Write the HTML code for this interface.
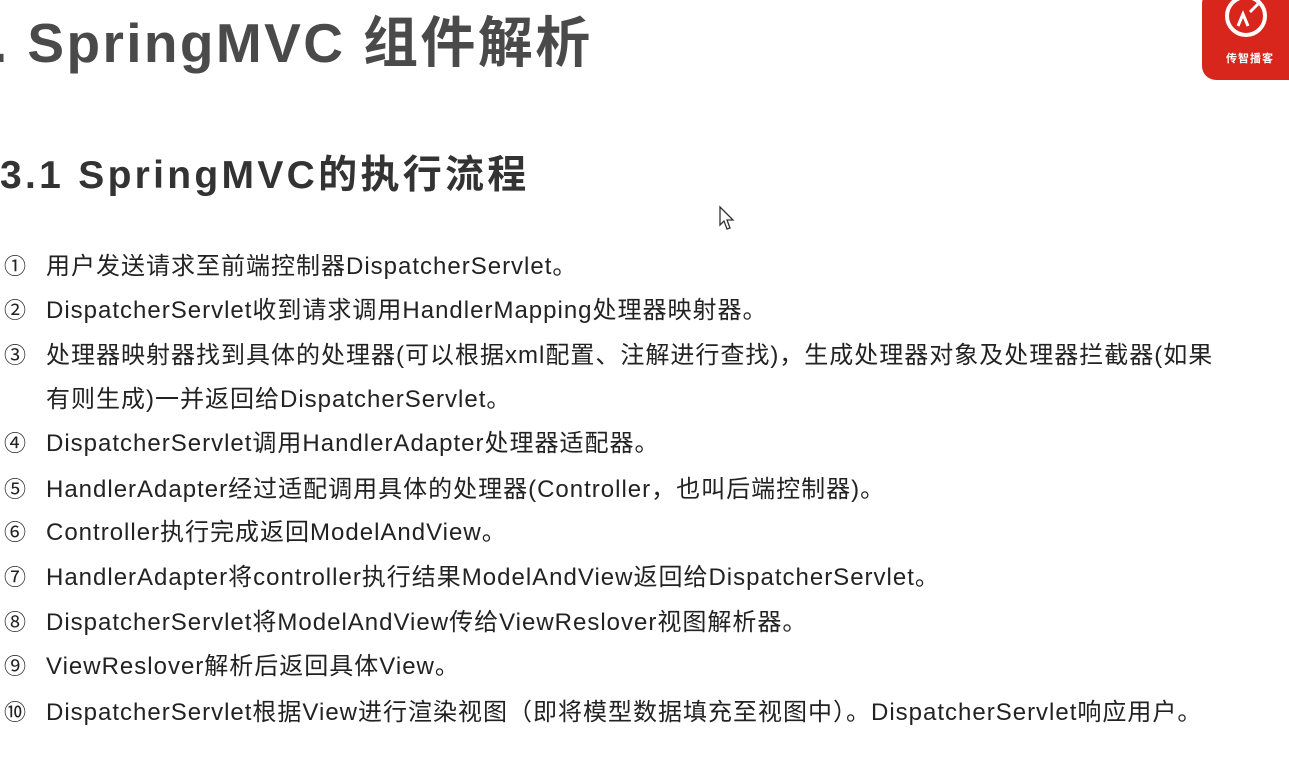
<!DOCTYPE html>
<html><head><meta charset="utf-8"><style>
body{margin:0;width:1289px;height:781px;background:#fff;overflow:hidden;position:relative;font-family:"Liberation Sans","Noto Sans CJK SC",sans-serif;}
.t1{position:absolute;left:-8px;top:-2px;font-size:55px;font-weight:bold;color:#4a4a4a;white-space:nowrap;letter-spacing:2.4px}
.t2{position:absolute;left:0;top:144px;font-size:39px;font-weight:bold;color:#333;white-space:nowrap;letter-spacing:3.3px}
.l{position:absolute;left:0;font-size:24px;color:#222;white-space:nowrap;letter-spacing:1px}
.n{display:inline-block;width:46px;font-size:22px;padding-left:4px;box-sizing:border-box;letter-spacing:0}
.logo{position:absolute;left:1202px;top:-10px;width:110px;height:90px;background:#d8261c;border-radius:14px;color:#fff;font-size:11px;font-weight:bold}
</style></head><body>
<div class="t1">. SpringMVC 组件解析</div>
<div class="logo">
<svg width="110" height="60" style="position:absolute;left:0;top:0"><circle cx="44" cy="26" r="19" fill="none" stroke="#fff" stroke-width="4"/><path d="M36 36 L41 24 L46 36 M48 22 L56 14" stroke="#fff" stroke-width="3" fill="none"/></svg>
<div style="position:absolute;left:24px;top:60px;letter-spacing:1px">传智播客</div>
</div>
<div class="t2">3.1 SpringMVC的执行流程</div>
<svg style="position:absolute;left:718px;top:205px" width="20" height="28"><path d="M2 2 L2 20 L6 16 L9 24 L12 23 L9 15 L15 15 Z" fill="#fff" stroke="#333" stroke-width="1.3"/></svg>
<div class="l" style="top:246px"><span class="n">①</span>用户发送请求至前端控制器DispatcherServlet。</div>
<div class="l" style="top:290px"><span class="n">②</span>DispatcherServlet收到请求调用HandlerMapping处理器映射器。</div>
<div class="l" style="top:335px"><span class="n">③</span>处理器映射器找到具体的处理器(可以根据xml配置、注解进行查找)，生成处理器对象及处理器拦截器(如果</div>
<div class="l" style="top:379px"><span class="n"></span>有则生成)一并返回给DispatcherServlet。</div>
<div class="l" style="top:423px"><span class="n">④</span>DispatcherServlet调用HandlerAdapter处理器适配器。</div>
<div class="l" style="top:469px"><span class="n">⑤</span>HandlerAdapter经过适配调用具体的处理器(Controller，也叫后端控制器)。</div>
<div class="l" style="top:512px"><span class="n">⑥</span>Controller执行完成返回ModelAndView。</div>
<div class="l" style="top:557px"><span class="n">⑦</span>HandlerAdapter将controller执行结果ModelAndView返回给DispatcherServlet。</div>
<div class="l" style="top:602px"><span class="n">⑧</span>DispatcherServlet将ModelAndView传给ViewReslover视图解析器。</div>
<div class="l" style="top:646px"><span class="n">⑨</span>ViewReslover解析后返回具体View。</div>
<div class="l" style="top:692px"><span class="n">⑩</span>DispatcherServlet根据View进行渲染视图（即将模型数据填充至视图中）。DispatcherServlet响应用户。</div>
</body></html>
